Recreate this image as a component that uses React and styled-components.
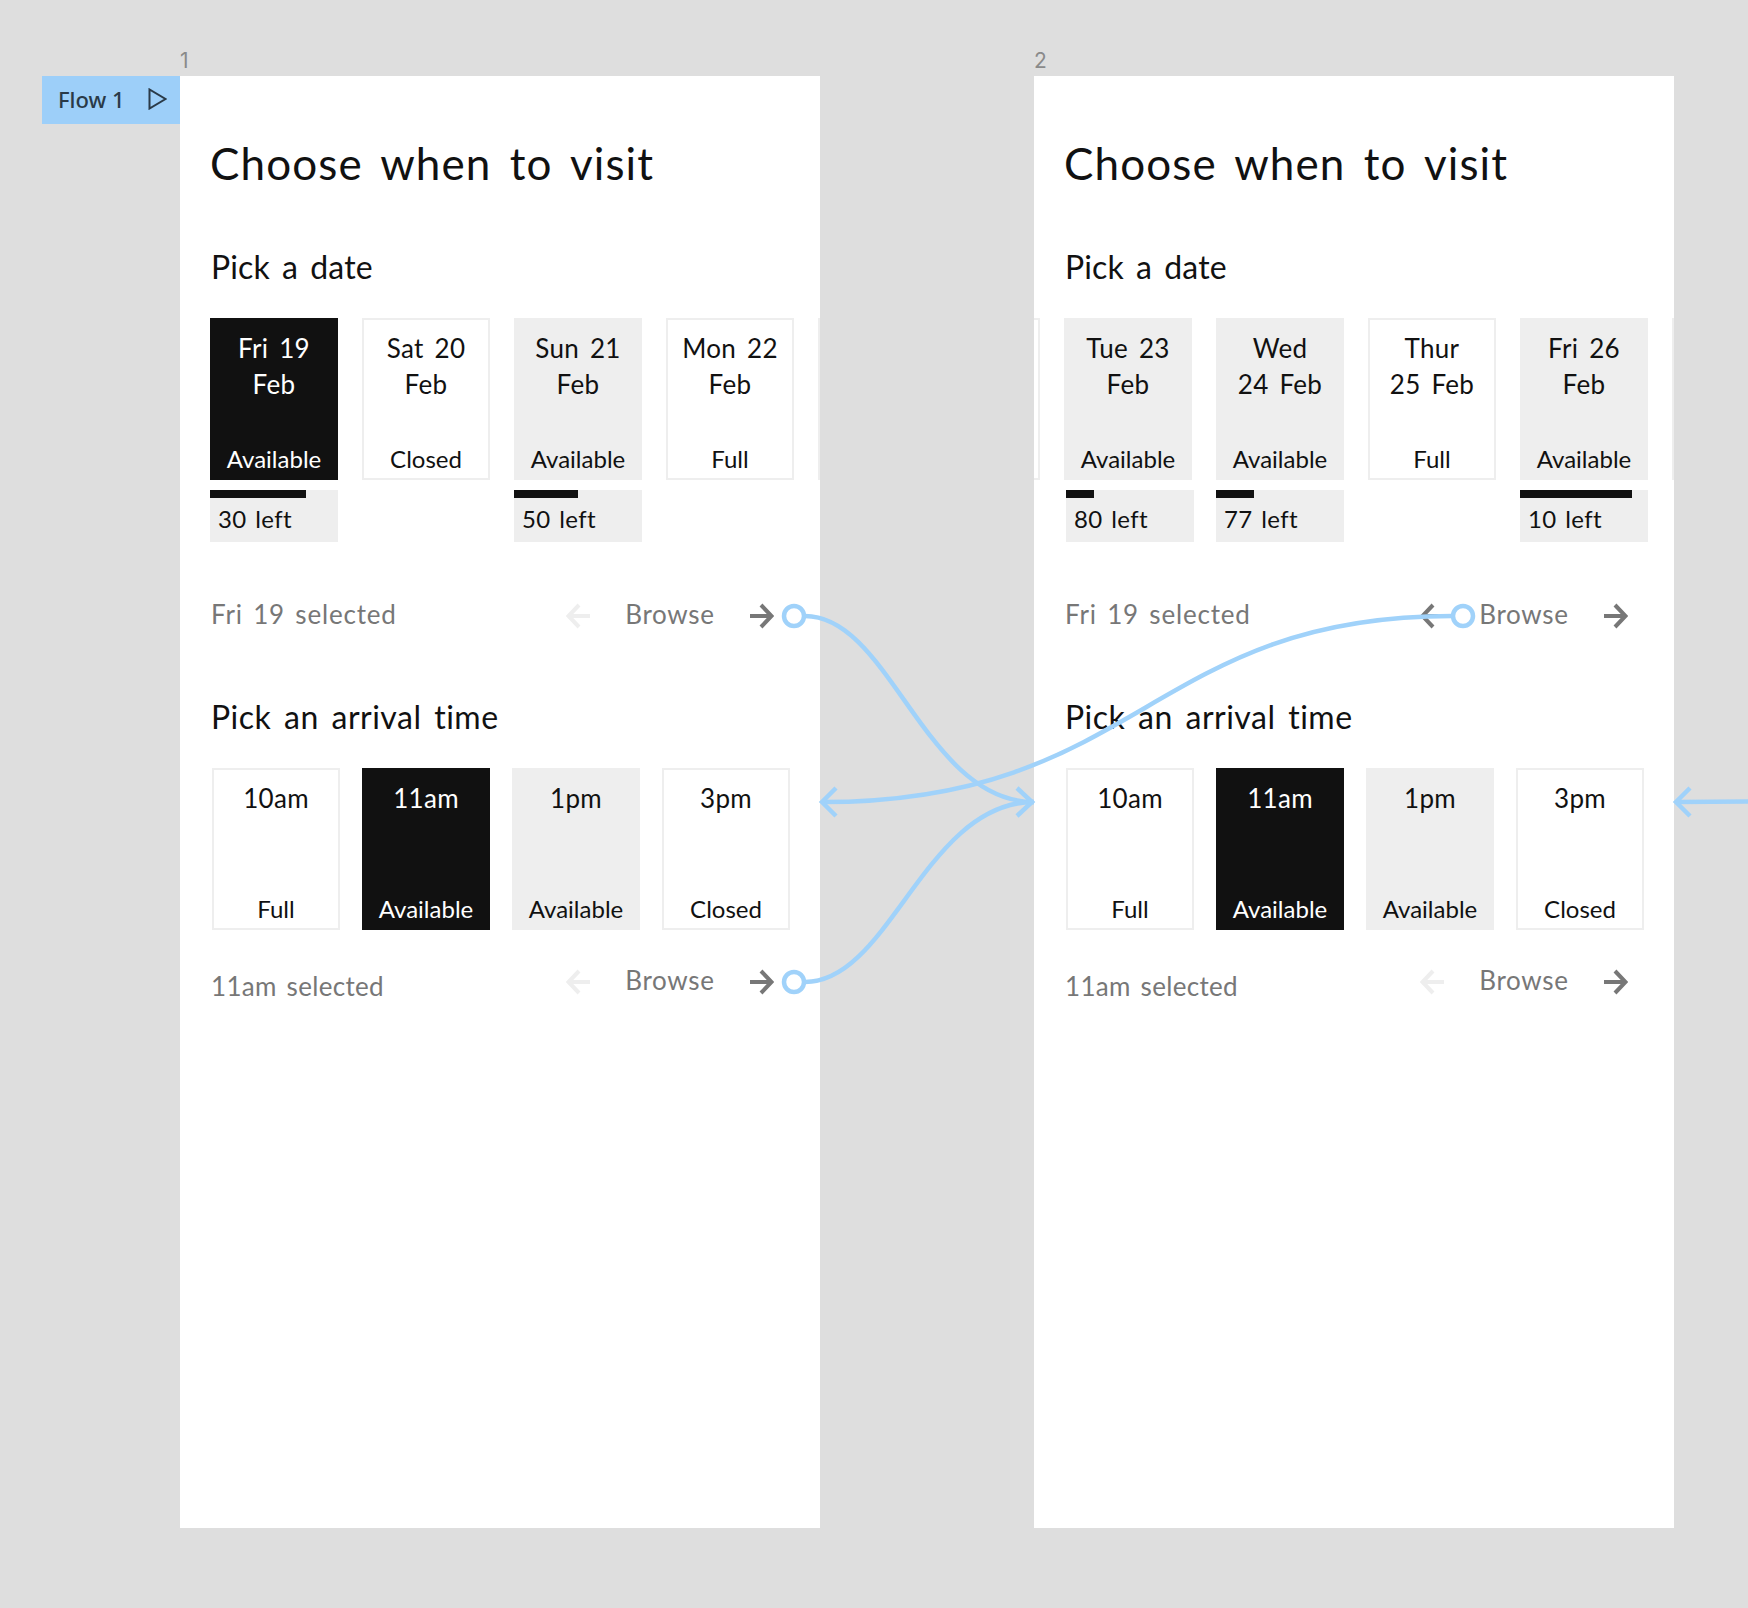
import React from 'react'
import styled, { createGlobalStyle } from 'styled-components'

const GlobalStyle = createGlobalStyle`
  html, body { margin: 0; padding: 0; background: #dedede; }
`

const Page = styled.div`
  position: relative;
  width: 1748px;
  height: 1608px;
  overflow: hidden;
  background: #dedede;
  display: flex;
  gap: 214px;
  padding: 76px 0 0 180px;
  box-sizing: border-box;
  font-family: Lato, "Open Sans", sans-serif;
  color: #111;
`

const FrameWrap = styled.div`
  position: relative;
  flex: none;
  width: 640px;
  height: 1452px;
`

const FrameLabel = styled.span`
  position: absolute;
  left: 0;
  top: -27px;
  font-family: Inter, sans-serif;
  font-size: 21px;
  line-height: 24px;
  color: #8a8a8a;
`

const FlowTag = styled.div`
  position: absolute;
  left: -138px;
  top: 0;
  width: 138px;
  height: 48px;
  box-sizing: border-box;
  padding: 0 13px 2px 16px;
  display: flex;
  align-items: center;
  justify-content: space-between;
  background: #9dcff9;
  font-family: "Noto Sans", sans-serif;
  font-size: 22px;
  font-weight: 500;
  color: #2a3a48;
`

const Frame = styled.section`
  width: 100%;
  height: 100%;
  padding-top: 59px;
  box-sizing: border-box;
  background: #fff;
  overflow: hidden;
`

const Title = styled.h1`
  margin: 0 0 0 30px;
  font-size: 44px;
  line-height: 56px;
  font-weight: 400;
  word-spacing: 6px;
  letter-spacing: 1.1px;
`

const Heading = styled.h2`
  margin: ${p => p.$top}px 0 0 31px;
  font-size: 32px;
  line-height: 40px;
  font-weight: 400;
  word-spacing: 4px;
  letter-spacing: ${p => p.$track}px;
`

const DateRail = styled.div`
  display: flex;
  gap: 24px;
  height: 224px;
  margin: 31px 0 0 ${p => p.$start}px;
`

const DateColumn = styled.div`
  flex: none;
  width: 128px;
  display: flex;
  flex-direction: column;
  gap: 10px;
`

const Slot = styled.div`
  flex: none;
  width: 128px;
  height: 162px;
  box-sizing: border-box;
  padding: 10px 0 4px;
  display: flex;
  flex-direction: column;
  justify-content: space-between;
  align-items: center;
  text-align: center;
  background: ${p => (p.$kind === 'selected' ? '#111' : p.$kind === 'open' ? '#eee' : '#fff')};
  border: 2px solid ${p => (p.$kind === 'selected' ? '#111' : '#eee')};
  color: ${p => (p.$kind === 'selected' ? '#fff' : '#111')};
`

const SlotName = styled.span`
  font-size: 26px;
  line-height: 36px;
  white-space: pre-line;
  word-spacing: 4px;
  letter-spacing: 0.3px;
`

const SlotStatus = styled.span`
  font-size: 24px;
  line-height: 30px;
`

const Stock = styled.div`
  width: 128px;
  height: 52px;
  margin-left: ${p => p.$shift || 0}px;
  background: #eee;
`

const StockBar = styled.div`
  width: ${p => p.$width}px;
  height: 8px;
  background: #111;
`

const StockText = styled.div`
  padding-left: 8px;
  font-size: 24px;
  line-height: 42px;
  word-spacing: 2px;
  letter-spacing: 0.4px;
`

const TimeRail = styled.div`
  display: flex;
  gap: 22px;
  margin: 31px 0 0 32px;
`

const NavRow = styled.div`
  display: flex;
  align-items: center;
  height: 40px;
  margin: ${p => p.$top}px 46px 0 31px;
`

const Selected = styled.span`
  font-size: 26px;
  line-height: 40px;
  color: #777;
  word-spacing: 3px;
  letter-spacing: ${p => p.$track}px;
  position: relative;
  top: ${p => p.$drop}px;
`

const Controls = styled.div`
  margin-left: auto;
  width: 208px;
  display: flex;
  align-items: center;
  justify-content: space-between;
`

const Browse = styled.span`
  font-size: 26px;
  line-height: 40px;
  color: #777;
  letter-spacing: 0.7px;
  position: relative;
  top: -2px;
`

const Wires = styled.svg`
  position: absolute;
  left: 0;
  top: 0;
  pointer-events: none;
`

const Arrow = ({ left, color }) => (
  <svg width="24" height="26" viewBox="0 0 24 26" fill="none" stroke={color} strokeWidth="4">
    <path d={left ? 'M24 13H3M13 2 2.5 13 13 24' : 'M0 13H21M11 2 21.5 13 11 24'} />
  </svg>
)

const Play = () => (
  <svg width="19" height="22" viewBox="0 0 19 22" fill="none" stroke="#2a3a48" strokeWidth="2">
    <path d="M1.5 1.5V20.5L17.5 11Z" />
  </svg>
)

const Nav = ({ top, text, drop, track, backColor }) => (
  <NavRow $top={top}>
    <Selected $drop={drop} $track={track}>{text}</Selected>
    <Controls>
      <Arrow left color={backColor} />
      <Browse>Browse</Browse>
      <Arrow color="#777" />
    </Controls>
  </NavRow>
)

const times = [
  { name: '10am', status: 'Full', kind: 'plain' },
  { name: '11am', status: 'Available', kind: 'selected' },
  { name: '1pm', status: 'Available', kind: 'open' },
  { name: '3pm', status: 'Closed', kind: 'plain' },
]

const screens = [
  {
    id: 1,
    start: 30,
    backColor: '#eee',
    dates: [
      { name: 'Fri 19\nFeb', status: 'Available', kind: 'selected', left: '30 left', bar: 96 },
      { name: 'Sat 20\nFeb', status: 'Closed', kind: 'plain' },
      { name: 'Sun 21\nFeb', status: 'Available', kind: 'open', left: '50 left', bar: 64 },
      { name: 'Mon 22\nFeb', status: 'Full', kind: 'plain' },
      { name: '', status: '', kind: 'plain' },
    ],
  },
  {
    id: 2,
    start: -122,
    backColor: '#777',
    dates: [
      { name: '', status: '', kind: 'plain' },
      { name: 'Tue 23\nFeb', status: 'Available', kind: 'open', left: '80 left', bar: 28, shift: 2 },
      { name: 'Wed\n24 Feb', status: 'Available', kind: 'open', left: '77 left', bar: 38 },
      { name: 'Thur\n25 Feb', status: 'Full', kind: 'plain' },
      { name: 'Fri 26\nFeb', status: 'Available', kind: 'open', left: '10 left', bar: 112 },
      { name: '', status: '', kind: 'plain' },
    ],
  },
]

function Screen({ data, flow }) {
  return (
    <FrameWrap>
      <FrameLabel>{data.id}</FrameLabel>
      {flow && (
        <FlowTag>
          Flow 1
          <Play />
        </FlowTag>
      )}
      <Frame>
        <Title>Choose when to visit</Title>
        <Heading $top={56} $track={0.1}>Pick a date</Heading>
        <DateRail $start={data.start}>
          {data.dates.map((d, i) => (
            <DateColumn key={i}>
              <Slot $kind={d.kind}>
                <SlotName>{d.name}</SlotName>
                <SlotStatus>{d.status}</SlotStatus>
              </Slot>
              {d.left && (
                <Stock $shift={d.shift}>
                  <StockBar $width={d.bar} />
                  <StockText>{d.left}</StockText>
                </Stock>
              )}
            </DateColumn>
          ))}
        </DateRail>
        <Nav top={54} text="Fri 19 selected" drop={-2} track={0.8} backColor={data.backColor} />
        <Heading $top={61} $track={0.5}>Pick an arrival time</Heading>
        <TimeRail>
          {times.map(t => (
            <Slot key={t.name} $kind={t.kind}>
              <SlotName>{t.name}</SlotName>
              <SlotStatus>{t.status}</SlotStatus>
            </Slot>
          ))}
        </TimeRail>
        <Nav top={32} text="11am selected" drop={4} track={0.3} backColor="#eee" />
      </Frame>
    </FrameWrap>
  )
}

export default function App() {
  const wire = '#a0d2fa'
  return (
    <>
      <GlobalStyle />
      <Page>
        <Screen data={screens[0]} flow />
        <Screen data={screens[1]} />
        <Wires width="1748" height="1608" fill="none" stroke={wire} strokeWidth="4.5">
          <path d="M805 616C890 616 925 802 1034 802" />
          <path d="M805 982C890 982 925 802 1034 802" />
          <path d="M1452 616C1150 616 1140 802 822 802" />
          <path d="M1748 801.5 1676 802" />
          <path d="M1017 788 1032 802 1017 816" />
          <path d="M836 788 822 802 836 816" />
          <path d="M1690 788 1676 802 1690 816" />
          <circle cx="794" cy="616" r="10" fill="#fff" />
          <circle cx="794" cy="982" r="10" fill="#fff" />
          <circle cx="1463" cy="616" r="10" fill="#fff" />
        </Wires>
      </Page>
    </>
  )
}
